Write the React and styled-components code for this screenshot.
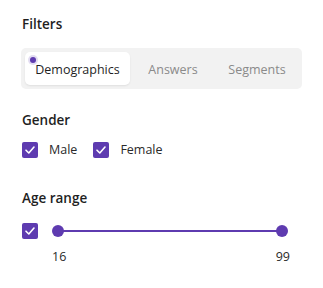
import React from "react";
import styled, { createGlobalStyle } from "styled-components";

const Global = createGlobalStyle`
  html, body { margin: 0; padding: 0; background: #fff; }
  body { font-family: "Open Sans", "Noto Sans", sans-serif; color: #222; }
`;

const PURPLE = "#5e3bb0";

const Panel = styled.div`
  width: 323px;
  height: 288px;
  box-sizing: border-box;
  padding: 16px 21px 0 21px;
  display: flex;
  flex-direction: column;
`;

const Title = styled.div`
  font-size: 13.5px;
  font-weight: 600;
  color: #1f1f1f;
  line-height: 16px;
  padding-left: 1px;
`;

const Tabs = styled.div`
  margin-top: 16px;
  height: 41px;
  box-sizing: border-box;
  background: #f2f2f2;
  border-radius: 5px;
  padding: 4px;
  display: flex;
  align-items: stretch;
`;

const Tab = styled.div`
  position: relative;
  width: ${(p) => p.$w}px;
  display: flex;
  align-items: center;
  justify-content: center;
  border-radius: 5px;
  font-size: 12.5px;
  color: ${(p) => (p.$active ? "#1f1f1f" : "#8a8a8a")};
  background: ${(p) => (p.$active ? "#fff" : "transparent")};
  box-shadow: ${(p) => (p.$active ? "0 1px 2px rgba(0,0,0,0.08)" : "none")};
  padding-top: 2px;
  box-sizing: border-box;
`;

const Dot = styled.span`
  position: absolute;
  left: 5px;
  top: 5px;
  width: 6px;
  height: 6px;
  border-radius: 50%;
  background: ${PURPLE};
  box-shadow: 0 0 0 2px rgba(94, 59, 176, 0.18);
`;

const Section = styled.div`
  margin-top: ${(p) => p.$mt}px;
  display: flex;
  flex-direction: column;
`;

const Label = styled.div`
  font-size: 13.5px;
  font-weight: 600;
  color: #1f1f1f;
  line-height: 16px;
  padding-left: 1px;
`;

const Row = styled.div`
  margin-top: ${(p) => p.$mt}px;
  display: flex;
  align-items: center;
  padding-left: 1px;
`;

const Box = styled.span`
  width: 16px;
  height: 16px;
  border-radius: 2px;
  background: ${PURPLE};
  display: inline-flex;
  align-items: center;
  justify-content: center;
  flex-shrink: 0;
`;

const CheckText = styled.span`
  font-size: 12.5px;
  color: #2a2a2a;
  margin-left: 11px;
  margin-right: 16px;
`;

const Check = () => (
  <Box>
    <svg width="12" height="12" viewBox="0 0 12 12">
      <path d="M2 6.2 L4.8 9 L10 3" fill="none" stroke="#fff" strokeWidth="1.6" strokeLinecap="round" strokeLinejoin="round" />
    </svg>
  </Box>
);

const SliderWrap = styled.div`
  margin-left: 14px;
  flex: 1;
  position: relative;
  height: 12px;
  margin-right: 14px;
`;

const Track = styled.div`
  position: absolute;
  left: 6px;
  right: 6px;
  top: 5px;
  height: 2px;
  background: ${PURPLE};
`;

const Thumb = styled.span`
  position: absolute;
  top: 0;
  ${(p) => (p.$right ? "right: 0;" : "left: 0;")}
  width: 12px;
  height: 12px;
  border-radius: 50%;
  background: ${PURPLE};
`;

const Values = styled.div`
  margin-top: 9px;
  margin-left: 31px;
  margin-right: 12px;
  display: flex;
  justify-content: space-between;
  font-size: 12.5px;
  color: #2a2a2a;
`;

export default function App() {
  return (
    <>
      <Global />
      <Panel>
        <Title>Filters</Title>
        <Tabs>
          <Tab $active $w={105}>
            <Dot />
            Demographics
          </Tab>
          <Tab $w={86}>Answers</Tab>
          <Tab $w={82}>Segments</Tab>
        </Tabs>
        <Section $mt={23}>
          <Label>Gender</Label>
          <Row $mt={13}>
            <Check />
            <CheckText>Male</CheckText>
            <Check />
            <CheckText>Female</CheckText>
          </Row>
        </Section>
        <Section $mt={32}>
          <Label>Age range</Label>
          <Row $mt={17}>
            <Check />
            <SliderWrap>
              <Track />
              <Thumb />
              <Thumb $right />
            </SliderWrap>
          </Row>
          <Values>
            <span>16</span>
            <span>99</span>
          </Values>
        </Section>
      </Panel>
    </>
  );
}
